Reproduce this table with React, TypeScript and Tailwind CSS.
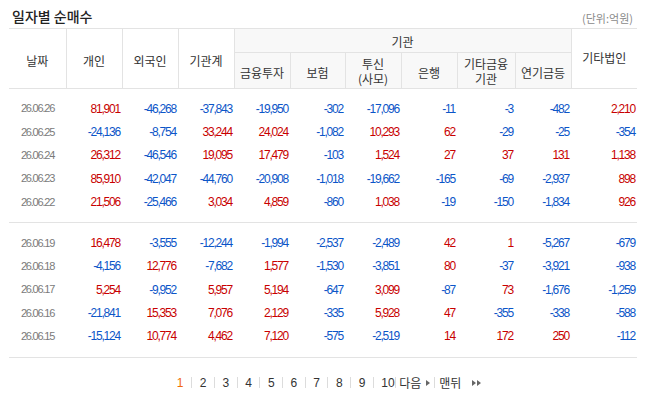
const KR = { fontFamily: '"Noto Sans CJK KR", "Noto Sans", sans-serif' };
const NUM = { fontFamily: '"Liberation Sans", Arial, sans-serif' };

const COLS = 'grid grid-cols-[57px_56px_56px_56px_56px_55px_56px_56px_58px_56px_66px]';

const groups: string[][][] = [
  [
    ['26.06.26', '81,901', '-46,268', '-37,843', '-19,950', '-302', '-17,096', '-11', '-3', '-482', '2,210'],
    ['26.06.25', '-24,136', '-8,754', '33,244', '24,024', '-1,082', '10,293', '62', '-29', '-25', '-354'],
    ['26.06.24', '26,312', '-46,546', '19,095', '17,479', '-103', '1,524', '27', '37', '131', '1,138'],
    ['26.06.23', '85,910', '-42,047', '-44,760', '-20,908', '-1,018', '-19,662', '-165', '-69', '-2,937', '898'],
    ['26.06.22', '21,506', '-25,466', '3,034', '4,859', '-860', '1,038', '-19', '-150', '-1,834', '926'],
  ],
  [
    ['26.06.19', '16,478', '-3,555', '-12,244', '-1,994', '-2,537', '-2,489', '42', '1', '-5,267', '-679'],
    ['26.06.18', '-4,156', '12,776', '-7,682', '1,577', '-1,530', '-3,851', '80', '-37', '-3,921', '-938'],
    ['26.06.17', '5,254', '-9,952', '5,957', '5,194', '-647', '3,099', '-87', '73', '-1,676', '-1,259'],
    ['26.06.16', '-21,841', '15,353', '7,076', '2,129', '-335', '5,928', '47', '-355', '-338', '-588'],
    ['26.06.15', '-15,124', '10,774', '4,462', '7,120', '-575', '-2,519', '14', '172', '250', '-112'],
  ],
];

function Header() {
  const th = 'border-r border-[#e3e3e3] font-normal text-[12px] text-[#333] leading-[14px] p-0';
  return (
    <table className="w-[628px] border-collapse table-fixed" style={KR}>
      <colgroup>
        {[57, 56, 56, 56, 56, 55, 56, 56, 58, 56, 66].map((w, i) => (
          <col key={i} style={{ width: w }} />
        ))}
      </colgroup>
      <thead>
        <tr className="h-[24px] border-t border-[#e3e3e3]">
          <th rowSpan={2} className={`${th} pt-[4px]`}>날짜</th>
          <th rowSpan={2} className={`${th} pt-[4px]`}>개인</th>
          <th rowSpan={2} className={`${th} pt-[4px]`}>외국인</th>
          <th rowSpan={2} className={`${th} pt-[4px]`}>기관계</th>
          <th colSpan={6} className={`${th} bg-[#f8f8f8] border-b pt-[2px]`}>기관</th>
          <th rowSpan={2} className="font-normal text-[12px] text-[#333] leading-[14px] p-0 pb-[2px]">기타법인</th>
        </tr>
        <tr className="h-[36px] border-b border-[#e3e3e3] bg-[#f8f8f8]">
          <th className={`${th} pt-[4px]`}>금융투자</th>
          <th className={`${th} pt-[4px]`}>보험</th>
          <th className={`${th} leading-[15px]`}>투신<br />(사모)</th>
          <th className={`${th} pt-[4px]`}>은행</th>
          <th className={`${th} leading-[15px]`}>기타금융<br />기관</th>
          <th className={`${th} pt-[4px]`}>연기금등</th>
        </tr>
      </thead>
    </table>
  );
}

function Row({ r }: { r: string[] }) {
  return (
    <div className={`${COLS} h-[23.3px] items-center`} style={NUM}>
      <div className="text-center text-[11px] tracking-[-1.2px] text-[#7a7a7a]">{r[0]}</div>
      {r.slice(1).map((v, i) => (
        <div
          key={i}
          className={`text-right text-[12px] tracking-[-1.2px] pr-[2px] ${v.startsWith('-') ? 'text-[#0b55c8]' : 'text-[#c80000]'}`}
        >
          {v}
        </div>
      ))}
    </div>
  );
}

function Pager() {
  const nums = ['2', '3', '4', '5', '6', '7', '8', '9', '10'];
  const sep = <span className="w-px h-[11px] bg-[#dcdcdc]" />;
  return (
    <div className="flex items-center justify-center w-[632px] h-[50px] text-[12px] text-[#333]" style={KR}>
      <span className="px-[8px] text-[#f26a0a]" style={NUM}>1</span>
      {nums.map((n) => (
        <span key={n} className="flex items-center">
          {sep}
          <span className="px-[7.5px]" style={NUM}>{n}</span>
        </span>
      ))}
      <span className="-ml-[7px] flex items-center">
        {sep}
        <span className="pl-[3px]">다음</span>
        <svg width="4" height="6" viewBox="0 0 4 6" className="ml-[5px] mr-[4px]"><path d="M0 0L4 3L0 6Z" fill="#666" /></svg>
        {sep}
        <span className="pl-[4px]">맨뒤</span>
        <svg width="9" height="6" viewBox="0 0 9 6" className="ml-[11px]"><path d="M0 0L4 3L0 6ZM5 0L9 3L5 6Z" fill="#666" /></svg>
      </span>
    </div>
  );
}

export default function App() {
  return (
    <div className="w-[658px] h-[405px] bg-white pl-[9px] overflow-hidden">
      <div className="flex items-end justify-between w-[628px] h-[28px] pb-[4px]">
        <h3 className="pl-[3px] text-[14px] font-medium text-[#222] leading-[16px]" style={KR}>일자별 순매수</h3>
        <span className="pr-[4px] text-[11px] text-[#8a8a8a] leading-[13px] -mb-[1px]" style={KR}>(단위:억원)</span>
      </div>
      <Header />
      {groups.map((g, gi) => (
        <div key={gi} className="w-[628px] border-b border-[#e3e3e3] pt-[8px] pb-[9px]">
          {g.map((r) => (
            <Row key={r[0]} r={r} />
          ))}
        </div>
      ))}
      <Pager />
    </div>
  );
}
